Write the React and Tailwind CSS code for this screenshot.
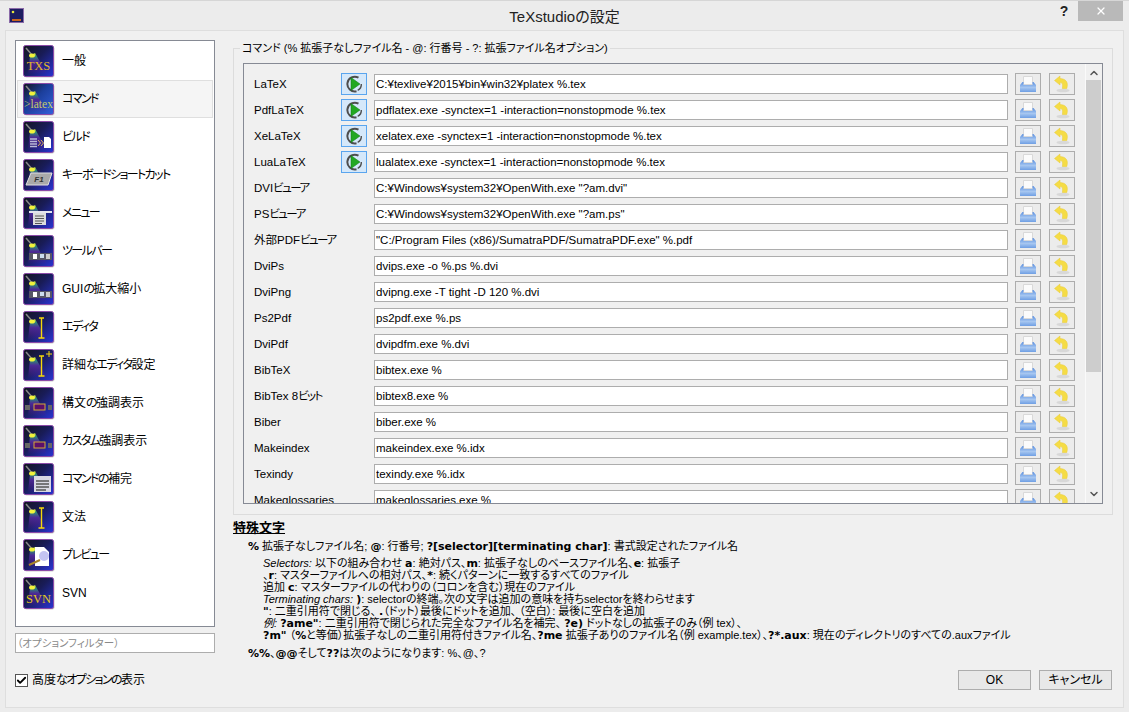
import React from 'react';
import { X, ChevronUp, ChevronDown, Check } from 'lucide-react';

const FONT = '"Liberation Sans","Noto Sans CJK JP",sans-serif';

const pages = [
  ['一般', 'txs'],
  ['コマンド', 'latex'],
  ['ビルド', 'build'],
  ['キーボードショートカット', 'key'],
  ['メニュー', 'menu'],
  ['ツールバー', 'toolbar'],
  ['GUIの拡大縮小', 'toolbar'],
  ['エディタ', 'cursor'],
  ['詳細なエディタ設定', 'cursorplus'],
  ['構文の強調表示', 'highlight'],
  ['カスタム強調表示', 'highlight'],
  ['コマンドの補完', 'complete'],
  ['文法', 'cursor'],
  ['プレビュー', 'preview'],
  ['SVN', 'svn'],
];

const commands = [
  ['LaTeX', 'C:¥texlive¥2015¥bin¥win32¥platex %.tex', true],
  ['PdfLaTeX', 'pdflatex.exe -synctex=1 -interaction=nonstopmode %.tex', true],
  ['XeLaTeX', 'xelatex.exe -synctex=1 -interaction=nonstopmode %.tex', true],
  ['LuaLaTeX', 'lualatex.exe -synctex=1 -interaction=nonstopmode %.tex', true],
  ['DVIビューア', 'C:¥Windows¥system32¥OpenWith.exe "?am.dvi"'],
  ['PSビューア', 'C:¥Windows¥system32¥OpenWith.exe "?am.ps"'],
  ['外部PDFビューア', '"C:/Program Files (x86)/SumatraPDF/SumatraPDF.exe" %.pdf'],
  ['DviPs', 'dvips.exe -o %.ps %.dvi'],
  ['DviPng', 'dvipng.exe -T tight -D 120 %.dvi'],
  ['Ps2Pdf', 'ps2pdf.exe %.ps'],
  ['DviPdf', 'dvipdfm.exe %.dvi'],
  ['BibTeX', 'bibtex.exe %'],
  ['BibTex 8ビット', 'bibtex8.exe %'],
  ['Biber', 'biber.exe %'],
  ['Makeindex', 'makeindex.exe %.idx'],
  ['Texindy', 'texindy.exe %.idx'],
  ['Makeglossaries', 'makeglossaries.exe %'],
];

// the kana in the reference are much narrower than the kanji
const Kana = ({ text }) =>
  text.split(/([ぁ-んァ-ヶー]+)/).map((part, i) =>
    i % 2 ? <span key={i} className="tracking-[-1.6px]">{part}</span> : part
  );

const Overlay = ({ kind }) => {
  switch (kind) {
    case 'txs':
      return <text x="15.5" y="25" textAnchor="middle" fontFamily="Liberation Serif, serif" fontSize="12.5" fill="#e2b52c">TXS</text>;
    case 'svn':
      return <text x="15.5" y="26" textAnchor="middle" fontFamily="Liberation Serif, serif" fontSize="12.5" fill="#e2c81c">SVN</text>;
    case 'latex':
      return <text x="15.5" y="25" textAnchor="middle" fontFamily="Liberation Serif, serif" fontSize="11.5" fill="#c2cc6a">{'>latex'}</text>;
    case 'build':
      return (
        <g>
          <path d="M7 18h7M7 20.5h7M7 23h7M7 25.5h7" stroke="#b9b9d8" strokeWidth="1.4" />
          <path d="M15 19l2.5 3-2.5 3M18 19l2.5 3-2.5 3" stroke="#d9b25a" fill="none" />
          <path d="M21 16h5l2 2v9h-7z" fill="#fff" />
        </g>
      );
    case 'key':
      return (
        <g>
          <path d="M8 14h21l-4 12H3z" fill="#a9a9a9" stroke="#e0e0e0" />
          <text x="16" y="23" textAnchor="middle" fontFamily="Liberation Sans, sans-serif" fontStyle="italic" fontWeight="700" fontSize="8" fill="#333">F1</text>
        </g>
      );
    case 'menu':
      return (
        <g>
          <path d="M6 15h23" stroke="#e4e4ee" strokeWidth="2" />
          <rect x="10" y="16" width="13" height="12" fill="#ddd" />
          <path d="M12 19h9M12 21.5h9M12 24h9M12 26.5h7" stroke="#555" strokeWidth="1.2" />
        </g>
      );
    case 'toolbar':
      return (
        <g>
          <rect x="6" y="18" width="23" height="7" fill="#556" />
          <rect x="10" y="19" width="4" height="5" fill="#fff" />
          <rect x="17" y="19" width="4" height="4" fill="#cde" />
          <rect x="23" y="19" width="4" height="5" fill="#ccc" />
        </g>
      );
    case 'cursor':
    case 'cursorplus':
      return (
        <g fill="none" stroke="#f5d90a" strokeWidth="1.4">
          <path d="M16 7h5M18.5 7v20M15.5 27h6" />
          {kind === 'cursorplus' && <path d="M23 5h6M26 2v6" strokeWidth="1" />}
        </g>
      );
    case 'highlight':
      return (
        <g>
          <rect x="2" y="18" width="5" height="5" fill="#666" />
          <rect x="25" y="18" width="4" height="5" fill="#666" />
          <rect x="11" y="17" width="11" height="6" fill="#5c0f6a" stroke="#d2a838" />
        </g>
      );
    case 'complete':
      return (
        <g>
          <rect x="11" y="13" width="17" height="16" fill="#d8d8e2" />
          <path d="M13 18h13M13 21h13M13 24h13M13 27h10" stroke="#555" strokeWidth="1.6" />
        </g>
      );
    case 'preview':
      return (
        <g>
          <path d="M12 8h9l5 5v14H12z" fill="#fff" />
          <circle cx="21" cy="17" r="5" fill="#c4c4f2" />
          <path d="M6 26l11-5" stroke="#a8842a" strokeWidth="2" />
        </g>
      );
    default:
      return null;
  }
};

const PageIcon = ({ kind, id }) => (
  <svg width="32" height="33" viewBox="0 0 32 33" className="shrink-0">
    <defs>
      <linearGradient id={`bg-${id}`} x1="0" y1="0" x2="1" y2="1">
        <stop offset="0" stopColor="#141420" />
        <stop offset="0.45" stopColor={kind === 'latex' ? '#1c3f9c' : '#191c58'} />
        <stop offset="1" stopColor={kind === 'latex' ? '#3360dc' : '#2a34d4'} />
      </linearGradient>
      <linearGradient id={`cone-${id}`} x1="0" y1="0" x2="0" y2="1">
        <stop offset="0" stopColor="#d8ef30" />
        <stop offset="0.16" stopColor="#2e8a76" />
        <stop offset="0.4" stopColor="#4c2a96" />
        <stop offset="1" stopColor="#5c1e96" stopOpacity="0" />
      </linearGradient>
    </defs>
    <rect x="1.5" y="1.5" width="30" height="31" rx="2" fill="#c9c9c9" />
    <rect x="0.5" y="0.5" width="30" height="31" rx="2" fill={`url(#bg-${id})`} stroke="#8a4aa8" />
    <path d="M7 11l5-3 12 21H5z" fill={`url(#cone-${id})`} />
    <path d="M3 3l6 7" stroke="#888" strokeWidth="1.5" />
    <ellipse cx="9" cy="10.5" rx="3" ry="2" fill="#f2f23c" />
    <Overlay kind={kind} />
  </svg>
);

const RunIcon = () => (
  <svg width="17" height="18" viewBox="0 0 17 18">
    <path d="M12.5 2.7A7.4 7.4 0 1 0 10.5 16.3" fill="none" stroke="#4e4e4e" strokeWidth="2" />
    <path d="M15.3 9a6.5 6.5 0 0 1-3.6 6.3" fill="none" stroke="#4e4e4e" strokeWidth="1.4" />
    <path d="M5 2.5l9 6.5-9 6.5z" fill="#22a822" stroke="#117a11" strokeWidth="0.5" />
  </svg>
);

const PrintIcon = () => (
  <svg width="16" height="16" viewBox="0 0 16 16">
    <defs>
      <linearGradient id="printBody" x1="0" y1="0" x2="0" y2="1">
        <stop offset="0" stopColor="#5a8fe0" />
        <stop offset="0.55" stopColor="#a6c6f0" />
        <stop offset="1" stopColor="#6f9fe4" />
      </linearGradient>
    </defs>
    <path d="M3.5 0.5h9v8h-9z" fill="#fbfbfb" stroke="#d9d9d9" />
    <path d="M2.5 6h1v3h9V6h1L16 9v7H0V9z" fill="url(#printBody)" />
  </svg>
);

const UndoIcon = () => (
  <svg width="16" height="18" viewBox="0 0 16 18">
    <ellipse cx="9" cy="15.5" rx="6.5" ry="1.8" fill="#d8d8d8" />
    <path d="M6 1L0.5 5.5 6 10V7.6c2.4 0 3 1.6 2.4 5.9h4.4C14.8 7 11.5 3.6 6 3.6z" fill="#f5dc46" stroke="#e8cb34" strokeWidth="0.5" />
  </svg>
);

const CommandRow = ({ label, value, run }) => (
  <div className="h-[26px] flex items-center shrink-0">
    <span className="w-[87px] pt-[2px] whitespace-nowrap text-[11.5px] text-black"><Kana text={label} /></span>
    <div className="w-[26px] h-[22px] flex items-center justify-center">
      {run && (
        <button className="w-[26px] h-[22px] flex items-center justify-center border border-[#5aa5ee] bg-[#d5e8fa]">
          <RunIcon />
        </button>
      )}
    </div>
    <input
      readOnly
      value={value}
      className="ml-[7px] w-[634px] h-[20px] px-[1px] bg-white border border-[#adadad] text-[11.5px] text-black outline-none"
    />
    <button className="ml-[7px] w-[26px] h-[22px] flex items-center justify-center border border-[#adadad] bg-[#ececec]">
      <PrintIcon />
    </button>
    <button className="ml-[8px] w-[26px] h-[22px] flex items-center justify-center border border-[#adadad] bg-[#ececec]">
      <UndoIcon />
    </button>
  </div>
);

const B = ({ children }) => <b className="font-bold font-['DejaVu_Sans'] text-[11px] leading-[12px]">{children}</b>;
const I = ({ children }) => <i className="italic">{children}</i>;
const Line = ({ children }) => <div className="h-[12px] leading-[12px]">{children}</div>;

const HelpText = () => (
  <div className="mt-[5px] text-[11px] text-black">
    <div className="text-[13px] font-bold underline leading-[16px]">特殊文字</div>
    <div className="ml-[15px] mt-[3px] h-[14px] leading-[14px] whitespace-nowrap">
      <B>%</B> 拡張子なしファイル名; <B>@</B>: 行番号; <B>?[selector][terminating char]</B>: 書式設定されたファイル名
    </div>
    <div className="ml-[30px] mt-[4px] whitespace-nowrap">
      <Line><I>Selectors:</I> 以下の組み合わせ <B>a</B>: 絶対パス、<B>m</B>: 拡張子なしのベースファイル名、<B>e</B>: 拡張子</Line>
      <Line>、<B>r</B>: マスターファイルへの相対パス、<B>*</B>: 続くパターンに一致するすべてのファイル</Line>
      <Line>追加 <B>c</B>: マスターファイルの代わりの（コロンを含む）現在のファイル</Line>
      <Line><I>Terminating chars:</I> <B>)</B>: selectorの終端。次の文字は追加の意味を持ちselectorを終わらせます</Line>
      <Line><B>"</B>: 二重引用符で閉じる、 <B>.</B>（ドット）最後にドットを追加、 （空白）: 最後に空白を追加</Line>
      <Line><I>例:</I> <B>?ame"</B>: 二重引用符で閉じられた完全なファイル名を補完、 <B>?e)</B> ドットなしの拡張子のみ（例 tex）、</Line>
      <Line><B>?m"</B> （<B>%</B>と等価）拡張子なしの二重引用符付きファイル名、<B>?me</B> 拡張子ありのファイル名（例 example.tex）、<B>?*.aux</B>: 現在のディレクトリのすべての.auxファイル</Line>
    </div>
    <div className="ml-[15px] mt-[5px] h-[14px] leading-[14px] whitespace-nowrap">
      <B>%%</B>、<B>@@</B>そして<B>??</B>は次のようになります: %、@、?
    </div>
  </div>
);

export default function App() {
  return (
    <div className="w-[1129px] h-[712px] flex flex-col bg-[#ececec] border-t border-[#d6d6d6] overflow-hidden [font-feature-settings:'palt']" style={{ fontFamily: FONT }}>
      {/* title bar */}
      <div className="h-[29px] shrink-0 flex items-start">
        <div className="ml-[9px] mt-[7px] w-[15px] h-[15px]">
          <svg width="15" height="15" viewBox="0 0 15 15">
            <rect x="0.5" y="0.5" width="14" height="14" fill="#1c1c60" stroke="#8a6aa8" />
            <circle cx="4" cy="4" r="1.3" fill="#e6e63c" />
            <path d="M3 12h9" stroke="#c8641e" strokeWidth="2" />
          </svg>
        </div>
        <div className="flex-1 text-center text-[15px] leading-[18px] mt-[7px] text-[#222] pl-[49px]">TeXstudioの設定</div>
        <div className="w-[16px] mr-[6px] text-center text-[14px] leading-[18px] mt-[1px] font-bold text-[#222]">?</div>
        <div className="w-[45px] h-[20px] mr-[6px] flex items-center justify-center bg-[#b9b9b9]">
          <X size={12} strokeWidth={2.5} className="text-white" />
        </div>
      </div>

      {/* dialog body */}
      <div className="flex-1 mx-[5px] mb-[4px] border border-[#dedede] bg-[#f0f0f0] flex pt-[9px] pl-[9px]">
        {/* page list */}
        <div className="w-[200px] shrink-0 flex flex-col">
          <div className="h-[587px] border border-[#868a94] bg-white p-[1px]">
            {pages.map(([name, kind], i) => (
              <div
                key={name}
                className={i === 1
                  ? 'h-[38px] flex items-center pl-[5px] gap-[7px] border border-[#dfdfdf] bg-[#f5f5f5]'
                  : 'h-[38px] flex items-center pl-[5px] gap-[7px] border border-transparent'}
              >
                <PageIcon kind={kind} id={i} />
                <span className="text-[12px] text-black whitespace-nowrap"><Kana text={name} /></span>
              </div>
            ))}
          </div>
          <input
            readOnly
            placeholder="（オプションフィルター）"
            className="mt-[6px] h-[20px] w-[200px] px-[1px] bg-white border border-[#adadad] text-[10.5px] outline-none placeholder:text-[#8a8a8a]"
          />
          <div className="mt-[18px] flex items-center gap-[4px]">
            <div className="w-[13px] h-[13px] border border-[#555] bg-white flex items-center justify-center">
              <Check size={11} strokeWidth={4} className="text-black" />
            </div>
            <span className="text-[12px] text-black"><Kana text="高度なオプションの表示" /></span>
          </div>
        </div>

        {/* settings side */}
        <div className="w-[880px] ml-[18px] flex flex-col">
          <fieldset className="h-[474px] mt-[1px] border border-[#dcdcdc] px-[9px] pb-[9px] pt-[8px] min-w-0 flex">
            <legend className="-ml-[3px] px-[2px] text-[11px] leading-[14px] text-black whitespace-nowrap">
              コマンド (% 拡張子なしファイル名 - @: 行番号 - ?: 拡張ファイル名オプション)
            </legend>
            <div className="w-[860px] h-[441px] border border-[#868a94] bg-[#f0f0f0] flex overflow-hidden">
              <div className="flex-1 overflow-hidden pl-[10px] pt-[7px] flex flex-col">
                {commands.map(([label, value, run]) => (
                  <CommandRow key={label} label={label} value={value} run={run} />
                ))}
              </div>
              <div className="w-[16px] mr-[1px] shrink-0 border-l border-[#fafafa] flex flex-col items-center">
                <ChevronUp size={12} strokeWidth={3} className="text-[#555] mt-[3px] h-[12px] shrink-0" />
                <div className="w-full h-[292px] mt-[1px] bg-[#cdcdcd]" />
                <div className="flex-1" />
                <ChevronDown size={12} strokeWidth={3} className="text-[#555] mb-[3px] shrink-0" />
              </div>
            </div>
          </fieldset>
          <HelpText />
          <div className="flex-1" />
          <div className="flex justify-end gap-[8px] mb-[17px] -mt-[40px]">
            <button className="w-[73px] h-[20px] border border-[#adadad] bg-[#e8e8e8] text-[12px] text-black">OK</button>
            <button className="w-[73px] h-[20px] mr-[1px] border border-[#adadad] bg-[#e8e8e8] text-[12px] text-black">キャンセル</button>
          </div>
        </div>
      </div>
    </div>
  );
}
